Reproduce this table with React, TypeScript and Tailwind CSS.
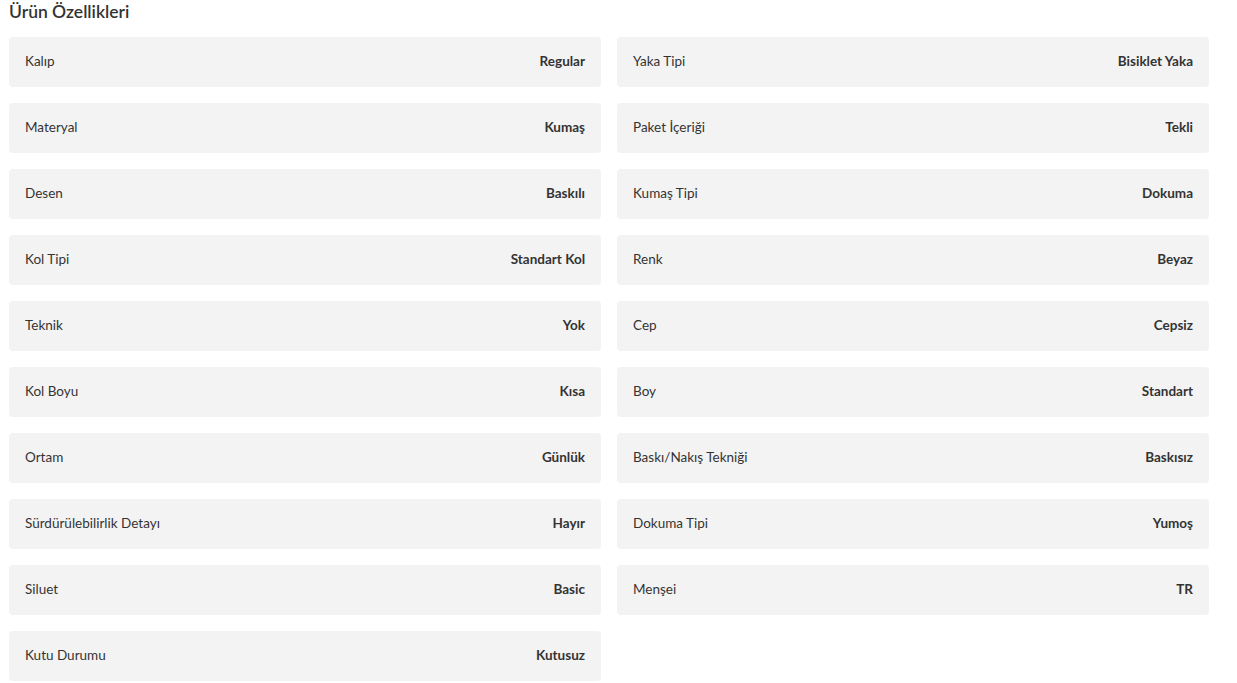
import React from "react";

const specs: [string, string][] = [
  ["Kalıp", "Regular"],
  ["Yaka Tipi", "Bisiklet Yaka"],
  ["Materyal", "Kumaş"],
  ["Paket İçeriği", "Tekli"],
  ["Desen", "Baskılı"],
  ["Kumaş Tipi", "Dokuma"],
  ["Kol Tipi", "Standart Kol"],
  ["Renk", "Beyaz"],
  ["Teknik", "Yok"],
  ["Cep", "Cepsiz"],
  ["Kol Boyu", "Kısa"],
  ["Boy", "Standart"],
  ["Ortam", "Günlük"],
  ["Baskı/Nakış Tekniği", "Baskısız"],
  ["Sürdürülebilirlik Detayı", "Hayır"],
  ["Dokuma Tipi", "Yumoş"],
  ["Siluet", "Basic"],
  ["Menşei", "TR"],
  ["Kutu Durumu", "Kutusuz"],
];

export default function App() {
  return (
    <div className="bg-white w-[1237px] h-[683px] pl-[9px] text-[#333] font-['Lato','Noto_Sans',sans-serif]">
      <h2 className="h-[37px] pt-[1px] text-[17.5px] font-semibold leading-[22px]">Ürün Özellikleri</h2>
      <div className="grid grid-cols-[592px_592px] gap-4 w-[1200px]">
        {specs.map(([label, value]) => (
          <div
            key={label}
            className="h-[50px] bg-[#f3f3f3] rounded-[4px] px-4 pb-[2px] flex items-center justify-between text-[13.5px]"
          >
            <span>{label}</span>
            <span className="font-bold">{value}</span>
          </div>
        ))}
      </div>
    </div>
  );
}
